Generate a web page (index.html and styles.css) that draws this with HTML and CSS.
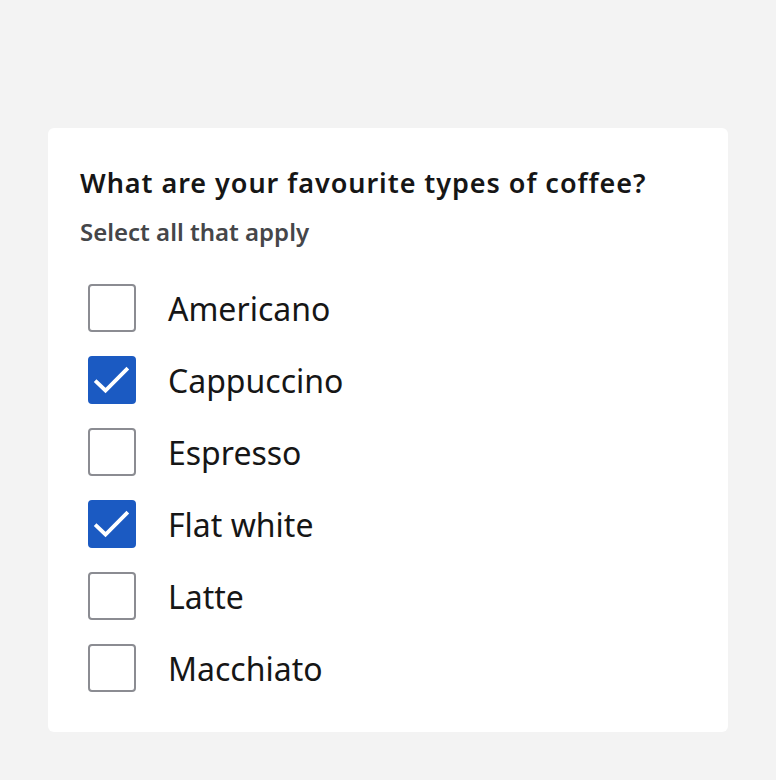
FILE: index.html
```html
<!DOCTYPE html>
<html lang="en">
<head>
<meta charset="utf-8">
<title>Coffee</title>
<link rel="stylesheet" href="styles.css">
</head>
<body>
<main class="page">
  <fieldset class="card">
    <legend class="title">What are your favourite types of coffee?</legend>
    <p class="hint">Select all that apply</p>
    <div class="options">
      <label class="option"><span class="box"></span><span class="label">Americano</span></label>
      <label class="option"><span class="box checked"><svg viewBox="0 0 48 48" width="48" height="48"><path d="M8.5 26 L17.5 34.5 L38.5 13.5" fill="none" stroke="#fff" stroke-width="3.8" stroke-linecap="square"/></svg></span><span class="label">Cappuccino</span></label>
      <label class="option"><span class="box"></span><span class="label">Espresso</span></label>
      <label class="option"><span class="box checked"><svg viewBox="0 0 48 48" width="48" height="48"><path d="M8.5 26 L17.5 34.5 L38.5 13.5" fill="none" stroke="#fff" stroke-width="3.8" stroke-linecap="square"/></svg></span><span class="label">Flat white</span></label>
      <label class="option"><span class="box"></span><span class="label">Latte</span></label>
      <label class="option"><span class="box"></span><span class="label">Macchiato</span></label>
    </div>
  </fieldset>
</main>
</body>
</html>
```
FILE: styles.css
```css
* { box-sizing: border-box; }
html, body {
  margin: 0;
  padding: 0;
  background: #f3f3f3;
  font-family: "Noto Sans", "Open Sans", sans-serif;
}
.page {
  padding: 128px 48px 48px 48px;
}
.card {
  margin: 0;
  border: 0;
  min-width: 0;
  background: #ffffff;
  border-radius: 6px;
  padding: 37px 32px 40px 32px;
  display: flex;
  flex-direction: column;
  height: 604px;
}
.title {
  float: left;
  padding: 0;
  margin: 0;
  font-size: 27px;
  line-height: 36px;
  font-weight: 600;
  color: #161616;
  letter-spacing: 0.95px;
}
.hint {
  clear: both;
  margin: 15px 0 0 0;
  font-size: 24px;
  line-height: 32px;
  font-weight: 600;
  color: #454649;
}
.options {
  margin-top: 36px;
  padding-left: 8px;
  display: flex;
  flex-direction: column;
  gap: 24px;
}
.option {
  display: flex;
  align-items: center;
  gap: 32px;
  height: 48px;
}
.box {
  width: 48px;
  height: 48px;
  flex: none;
  border: 2px solid #8b8c92;
  border-radius: 4px;
  background: #fff;
  position: relative;
}
.box.checked {
  background: #1b5ac2;
  border-color: #1b5ac2;
}
.box svg {
  position: absolute;
  left: -2px;
  top: -2px;
}
.label {
  font-size: 32px;
  line-height: 40px;
  padding-top: 2px;
  color: #161616;
}
```
